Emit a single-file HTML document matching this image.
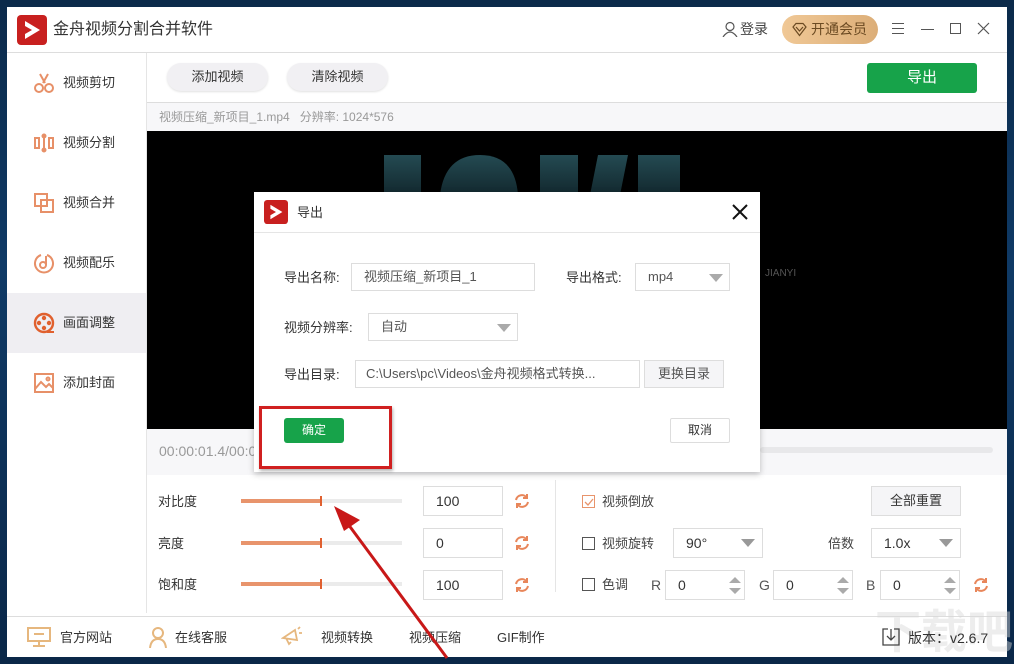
<!DOCTYPE html>
<html><head><meta charset="utf-8"><style>
*{margin:0;padding:0;box-sizing:border-box}
body{width:1014px;height:664px;overflow:hidden;position:relative;font-family:"Liberation Sans","Noto Sans CJK SC",sans-serif;background:linear-gradient(180deg,#0b2a4a 0%,#0f3a66 40%,#0a2748 100%);}
.a{position:absolute}
.t{font-size:13px;color:#333;white-space:nowrap;line-height:16px}
.win{left:7px;top:7px;width:1000px;height:650px;background:#fff}
.btn{background:#f1f0f3;border-radius:14px;font-size:13px;color:#333;text-align:center;line-height:28px;box-shadow:0 1px 2px rgba(0,0,0,.12)}
.box{border:1px solid #ddd;background:#fff;font-size:14px;color:#333;padding-left:12px}
.tri{position:absolute;width:0;height:0;border-left:7px solid transparent;border-right:7px solid transparent;border-top:8px solid #999}
.cb{width:13px;height:13px;border:1px solid #555;background:#fff}
</style></head><body>
<div class="a win"></div>
<svg class="a" style="left:17px;top:15px" width="30" height="30" viewBox="0 0 30 30"><rect width="30" height="30" rx="4" fill="#c8201f"/><path d="M8 6 L23 15 L8 24 L8 19 L15 15 L8 11Z" fill="#fff"/></svg>
<div class="a t" style="left:53px;top:21px;font-size:16px;line-height:18px;color:#333">金舟视频分割合并软件</div>
<svg class="a" style="left:722px;top:21px" width="16" height="16" viewBox="0 0 16 16" fill="none" stroke="#555" stroke-width="1.2"><circle cx="8" cy="5.5" r="4"/><path d="M1 16 Q8 6 15 16"/></svg>
<div class="a t" style="left:740px;top:21px;font-size:14px;color:#444">登录</div>
<div class="a" style="left:782px;top:15px;width:96px;height:29px;border-radius:15px;background:linear-gradient(90deg,#f0c896,#dcae78)"></div>
<svg class="a" style="left:792px;top:22px" width="15" height="15" viewBox="0 0 15 15" fill="none" stroke="#6b4a22" stroke-width="1.2"><path d="M1 5 L4 1.5 H11 L14 5 L7.5 13.5Z M4 5 L7.5 9 L11 5"/></svg>
<div class="a t" style="left:811px;top:21px;font-size:14px;color:#6b4a22">开通会员</div>
<div class="a" style="left:892px;top:23px;width:12px;height:1px;background:#555;box-shadow:0 5px 0 #555,0 10px 0 #555"></div>
<div class="a" style="left:921px;top:29px;width:13px;height:1px;background:#555"></div>
<div class="a" style="left:950px;top:23px;width:11px;height:11px;border:1.2px solid #555"></div>
<svg class="a" style="left:977px;top:22px" width="13" height="13" viewBox="0 0 13 13" stroke="#555" stroke-width="1.2"><path d="M1 1L12 12M12 1L1 12"/></svg>
<div class="a" style="left:7px;top:52px;width:1000px;height:1px;background:#ddd"></div>
<div class="a" style="left:146px;top:53px;width:1px;height:560px;background:#e5e5e5"></div>
<div class="a" style="left:7px;top:293px;width:139px;height:60px;background:#efeef2"></div>
<svg class="a" style="left:33px;top:72px" width="22" height="22" viewBox="0 0 22 22" fill="none" stroke="#e79068" stroke-width="2"><circle cx="6" cy="16" r="4"/><circle cx="16" cy="16" r="4"/><path d="M7 2 L12 11 M15 2 L10 11"/></svg>
<svg class="a" style="left:33px;top:132px" width="22" height="22" viewBox="0 0 22 22" fill="none" stroke="#e79068" stroke-width="2"><rect x="2" y="6" width="4" height="10"/><rect x="16" y="6" width="4" height="10"/><path d="M11 3V19"/><circle cx="11" cy="4" r="1.5" fill="#e79068"/><circle cx="11" cy="18" r="1.5" fill="#e79068"/></svg>
<svg class="a" style="left:33px;top:192px" width="22" height="22" viewBox="0 0 22 22" fill="none" stroke="#e79068" stroke-width="2"><rect x="2" y="2" width="12" height="12"/><rect x="8" y="8" width="12" height="12"/></svg>
<svg class="a" style="left:33px;top:252px" width="22" height="22" viewBox="0 0 22 22" fill="none" stroke="#e79068" stroke-width="2"><path d="M8 3A9 9 0 1 0 14 3"/><circle cx="10" cy="13" r="3"/><path d="M13 13V4"/></svg>
<svg class="a" style="left:33px;top:312px" width="22" height="22" viewBox="0 0 22 22"><circle cx="11" cy="11" r="9" fill="none" stroke="#e0602e" stroke-width="2.4"/><g fill="#e0602e"><circle cx="11" cy="6" r="2.2"/><circle cx="11" cy="16" r="2.2"/><circle cx="6" cy="11" r="2.2"/><circle cx="16" cy="11" r="2.2"/></g><path d="M14 20H21" stroke="#e0602e" stroke-width="2"/></svg>
<svg class="a" style="left:33px;top:372px" width="22" height="22" viewBox="0 0 22 22" fill="none" stroke="#e79068" stroke-width="2"><rect x="2" y="2" width="18" height="18"/><path d="M2 17L8 10L13 15L16 12L20 16"/><circle cx="15" cy="7" r="1.5"/></svg>
<div class="a t" style="left:63px;top:75px">视频剪切</div>
<div class="a t" style="left:63px;top:135px">视频分割</div>
<div class="a t" style="left:63px;top:195px">视频合并</div>
<div class="a t" style="left:63px;top:255px">视频配乐</div>
<div class="a t" style="left:63px;top:315px">画面调整</div>
<div class="a t" style="left:63px;top:375px">添加封面</div>
<div class="a btn" style="left:167px;top:63px;width:101px">添加视频</div>
<div class="a btn" style="left:287px;top:63px;width:101px">清除视频</div>
<div class="a" style="left:867px;top:63px;width:110px;height:30px;background:#17a34a;border-radius:3px;color:#fff;font-size:15px;text-align:center;line-height:30px">导出</div>
<div class="a" style="left:147px;top:102px;width:860px;height:1px;background:#ddd"></div>
<div class="a" style="left:147px;top:103px;width:860px;height:28px;background:#f7f7f9"></div>
<div class="a t" style="left:159px;top:109px;font-size:12px;color:#999">视频压缩_新项目_1.mp4 &nbsp; 分辨率: 1024*576</div>
<div class="a" style="left:147px;top:131px;width:860px;height:298px;background:#000"></div>
<svg class="a" style="left:380px;top:150px" width="300" height="45"><defs><linearGradient id="g" x1="0" x2="0" y1="0" y2="1"><stop offset="0" stop-color="#244a52"/><stop offset="1" stop-color="#12282e"/></linearGradient></defs><g fill="url(#g)"><rect x="4" y="5" width="37" height="40"/><path d="M60 45 Q65 5 100 5 Q135 5 138 45Z"/><rect x="160" y="5" width="38" height="40"/><path d="M218 5 H248 L240 45 H210Z"/><rect x="258" y="5" width="42" height="40"/></g></svg>
<div class="a" style="left:765px;top:268px;font-size:10px;color:#555">JIANYI</div>
<div class="a" style="left:147px;top:429px;width:860px;height:46px;background:#f7f7f9"></div>
<div class="a t" style="left:159px;top:443px;font-size:14px;color:#999">00:00:01.4/00:00</div>
<div class="a" style="left:760px;top:447px;width:233px;height:6px;background:#e8e8ea;border-radius:3px"></div>
<div class="a" style="left:555px;top:480px;width:1px;height:112px;background:#e5e5e5"></div>
<div class="a t" style="left:158px;top:494px">对比度</div>
<div class="a t" style="left:158px;top:536px">亮度</div>
<div class="a t" style="left:158px;top:577px">饱和度</div>
<div class="a" style="left:241px;top:499px;width:161px;height:4px;background:#ebebeb"></div>
<div class="a" style="left:241px;top:499px;width:80px;height:4px;background:#e8946c"></div>
<div class="a" style="left:320px;top:496px;width:2px;height:10px;background:#e06030"></div>
<div class="a" style="left:241px;top:541px;width:161px;height:4px;background:#ebebeb"></div>
<div class="a" style="left:241px;top:541px;width:80px;height:4px;background:#e8946c"></div>
<div class="a" style="left:320px;top:538px;width:2px;height:10px;background:#e06030"></div>
<div class="a" style="left:241px;top:582px;width:161px;height:4px;background:#ebebeb"></div>
<div class="a" style="left:241px;top:582px;width:80px;height:4px;background:#e8946c"></div>
<div class="a" style="left:320px;top:579px;width:2px;height:10px;background:#e06030"></div>
<div class="a box" style="left:423px;top:486px;width:80px;height:30px;line-height:28px">100</div>
<div class="a box" style="left:423px;top:528px;width:80px;height:30px;line-height:28px">0</div>
<div class="a box" style="left:423px;top:570px;width:80px;height:30px;line-height:28px">100</div>
<svg width="0" height="0" style="position:absolute"><defs><g id="rf" fill="none" stroke="#e8865a" stroke-width="2"><path d="M3 8A6 6 0 0 1 14 6"/><path d="M15 10A6 6 0 0 1 4 12"/><path d="M14 2V6H10" /><path d="M4 16V12H8"/></g></defs></svg>
<svg class="a" style="left:513px;top:492px" width="18" height="18"><use href="#rf"/></svg>
<svg class="a" style="left:513px;top:534px" width="18" height="18"><use href="#rf"/></svg>
<svg class="a" style="left:513px;top:576px" width="18" height="18"><use href="#rf"/></svg>
<svg class="a" style="left:972px;top:576px" width="18" height="18"><use href="#rf"/></svg>
<div class="a cb" style="left:582px;top:495px;border-color:#e8946c"></div>
<svg class="a" style="left:584px;top:497px" width="10" height="10"><path d="M1 5L4 8L9 2" fill="none" stroke="#e8946c" stroke-width="1.3"/></svg>
<div class="a t" style="left:602px;top:494px;color:#444">视频倒放</div>
<div class="a" style="left:871px;top:486px;width:90px;height:30px;border:1px solid #ddd;background:#f5f5f7;font-size:13px;text-align:center;line-height:28px;color:#333">全部重置</div>
<div class="a cb" style="left:582px;top:537px"></div>
<div class="a t" style="left:602px;top:536px;color:#444">视频旋转</div>
<div class="a box" style="left:673px;top:528px;width:90px;height:30px;line-height:28px">90°</div>
<div class="tri" style="left:741px;top:539px"></div>
<div class="a t" style="left:828px;top:536px;color:#444">倍数</div>
<div class="a box" style="left:871px;top:528px;width:90px;height:30px;line-height:28px">1.0x</div>
<div class="tri" style="left:939px;top:539px"></div>
<div class="a cb" style="left:582px;top:578px"></div>
<div class="a t" style="left:602px;top:577px;color:#444">色调</div>
<div class="a t" style="left:651px;top:577px;font-size:14px;color:#555">R</div>
<div class="a box" style="left:665px;top:570px;width:80px;height:30px;line-height:28px">0</div>
<div class="a t" style="left:759px;top:577px;font-size:14px;color:#555">G</div>
<div class="a box" style="left:773px;top:570px;width:80px;height:30px;line-height:28px">0</div>
<div class="a t" style="left:866px;top:577px;font-size:14px;color:#555">B</div>
<div class="a box" style="left:880px;top:570px;width:80px;height:30px;line-height:28px">0</div>
<svg class="a" style="left:728px;top:576px" width="14" height="20"><path d="M1 7L7 1L13 7Z M1 12L7 18L13 12Z" fill="#aaa"/></svg>
<svg class="a" style="left:836px;top:576px" width="14" height="20"><path d="M1 7L7 1L13 7Z M1 12L7 18L13 12Z" fill="#aaa"/></svg>
<svg class="a" style="left:943px;top:576px" width="14" height="20"><path d="M1 7L7 1L13 7Z M1 12L7 18L13 12Z" fill="#aaa"/></svg>
<div class="a" style="left:7px;top:616px;width:1000px;height:1px;background:#ddd"></div>
<svg class="a" style="left:26px;top:626px" width="26" height="22" viewBox="0 0 26 22" fill="none" stroke="#e6b77e" stroke-width="2"><rect x="2" y="2" width="22" height="13"/><path d="M13 15V20M7 20H19M8 8H18"/></svg>
<div class="a t" style="left:60px;top:630px">官方网站</div>
<svg class="a" style="left:148px;top:626px" width="20" height="22" viewBox="0 0 20 22" fill="none" stroke="#e6b77e" stroke-width="2"><circle cx="10" cy="7" r="5"/><path d="M2 22Q3 13 10 13Q17 13 18 22"/></svg>
<div class="a t" style="left:175px;top:630px">在线客服</div>
<svg class="a" style="left:281px;top:626px" width="22" height="20" viewBox="0 0 22 20" fill="none" stroke="#e6b77e" stroke-width="1.8"><path d="M2 12L14 4L16 14Z M5 12L8 18L10 16"/><path d="M17 3L19 1M18 7H21"/></svg>
<div class="a t" style="left:321px;top:630px;color:#333">视频转换</div>
<div class="a t" style="left:409px;top:630px;color:#333">视频压缩</div>
<div class="a t" style="left:497px;top:630px;color:#333">GIF制作</div>
<div class="a" style="left:875px;top:602px;font-size:46px;line-height:60px;white-space:nowrap;color:rgba(215,215,215,.45);font-weight:bold">下载吧</div>
<svg class="a" style="left:882px;top:628px" width="18" height="18" viewBox="0 0 18 18" fill="none" stroke="#444" stroke-width="1.3"><path d="M6 1H1V17H17V1H12M9 1V12M5 8L9 12L13 8"/></svg>
<div class="a t" style="left:908px;top:630px;font-size:14px;color:#333">版本：v2.6.7</div>
<div class="a" style="left:254px;top:192px;width:506px;height:280px;background:#fff;box-shadow:0 2px 6px rgba(0,0,0,.25)"></div>
<svg class="a" style="left:264px;top:200px" width="24" height="24" viewBox="0 0 30 30"><rect width="30" height="30" rx="4" fill="#c8201f"/><path d="M8 6 L23 15 L8 24 L8 19 L15 15 L8 11Z" fill="#fff"/></svg>
<div class="a t" style="left:297px;top:205px">导出</div>
<svg class="a" style="left:732px;top:204px" width="16" height="16" stroke="#111" stroke-width="2"><path d="M1 1L15 15M15 1L1 15"/></svg>
<div class="a" style="left:254px;top:232px;width:506px;height:1px;background:#e5e5e5"></div>
<div class="a t" style="left:284px;top:270px">导出名称:</div>
<div class="a box" style="left:351px;top:263px;width:184px;height:28px;line-height:26px;font-size:13px;color:#555">视频压缩_新项目_1</div>
<div class="a t" style="left:566px;top:270px">导出格式:</div>
<div class="a box" style="left:635px;top:263px;width:95px;height:28px;line-height:26px;font-size:13px;color:#555">mp4</div>
<div class="tri" style="left:709px;top:274px;border-top-color:#aaa"></div>
<div class="a t" style="left:284px;top:320px">视频分辨率:</div>
<div class="a box" style="left:368px;top:313px;width:150px;height:28px;line-height:26px;font-size:13px;color:#555">自动</div>
<div class="tri" style="left:497px;top:324px;border-top-color:#aaa"></div>
<div class="a t" style="left:284px;top:367px">导出目录:</div>
<div class="a box" style="left:355px;top:360px;width:285px;height:28px;line-height:26px;font-size:13px;color:#555;padding-left:10px">C:\Users\pc\Videos\金舟视频格式转换...</div>
<div class="a" style="left:644px;top:360px;width:80px;height:28px;border:1px solid #ddd;background:#f5f5f7;font-size:13px;color:#555;text-align:center;line-height:26px">更换目录</div>
<div class="a" style="left:284px;top:418px;width:60px;height:25px;background:#17a34a;border-radius:3px;color:#fff;font-size:12px;text-align:center;line-height:25px">确定</div>
<div class="a" style="left:670px;top:418px;width:60px;height:25px;border:1px solid #ddd;background:#fff;border-radius:2px;font-size:12px;color:#333;text-align:center;line-height:23px">取消</div>
<div class="a" style="left:259px;top:406px;width:133px;height:63px;border:3px solid #d02020;box-shadow:1px 2px 3px rgba(0,0,0,.3)"></div>
<svg class="a" style="left:0;top:0" width="1014" height="664"><path d="M447 658 L348 524" stroke="#c81818" stroke-width="3"/><path d="M334 506 L360 520 L344 531Z" fill="#c81818"/></svg>
</body></html>
